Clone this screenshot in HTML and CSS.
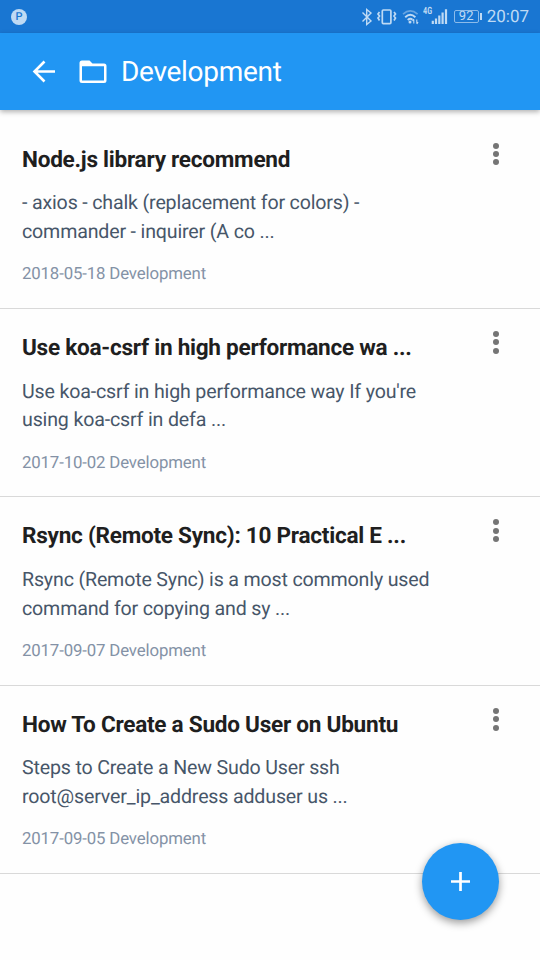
FILE: index.html
```
<!DOCTYPE html>
<html lang="en">
<head>
<meta charset="utf-8">
<title>Development</title>
<link rel="stylesheet" href="styles.css">
</head>
<body>
<div class="status">
  <span class="badge">P</span>
  <div class="indicators">
    <svg class="signals" width="88" height="20" viewBox="361 7 88 20" fill="none" stroke="#bfdaf4" stroke-width="1.4">
      <path d="M362.500 12.500l8.500 8.500-4.300 3.500V9.500l4.300 3.500-8.500 8.500"/>
      <rect x="382.300" y="10" width="8.600" height="13.600" rx="1" stroke-width="1.700"/>
      <path d="M379.500 12l-1.500 2 1.500 2-1.500 2 1.500 2.500M394 12l1.500 2-1.500 2 1.500 2-1.500 2.500" stroke-width="1.700"/>
      <path d="M403 14.200q7.300-6.500 14.600 0" stroke="#68a5e1" stroke-width="1.600"/>
      <path d="M405.200 17.200q5.100-4.700 10.200 0M407.700 20q2.600-2.200 4.800-.3" stroke-width="1.900"/>
      <circle cx="410" cy="22" r="1.500" fill="#bfdaf4" stroke="none"/>
      <path d="M413.800 23.500v-4m-1.300 1.300l1.300-1.600M416.800 19.500v4m1.300-1.300l-1.300 1.600" stroke-width="1.100"/>
      <path d="M432.800 20.800V24M436 18.500V24M439.300 15.500V24M442.600 12.500V24M446 9.300V24" stroke-width="2.200"/>
    </svg>
    <span class="network">4G</span>
    <span class="battery">92</span>
    <span class="clock">20:07</span>
  </div>
</div>
<header class="bar">
  <svg class="back" width="24" height="24" viewBox="0 0 24 24" fill="none" stroke="#fff" stroke-width="2.600"><path d="M23 11.500H3M12.500 1.500L2.500 11.500l10 10"/></svg>
  <svg class="folder" width="30" height="24" viewBox="0 0 30 24"><path fill="#fff" fill-rule="evenodd" d="M4 .5h7.500l3 3h11.500a2.500 2.500 0 0 1 2.500 2.500v14.500a2.500 2.500 0 0 1-2.500 2.500H4a2.500 2.500 0 0 1-2.500-2.500v-17.500A2.500 2.500 0 0 1 4 .5zM4 6.300v14.200h22V6.300z"/></svg>
  <h1>Development</h1>
</header>
<main class="notes">
  <article class="note">
    <h2>Node.js library recommend</h2>
    <p>- axios - chalk (replacement for colors) -<br>commander - inquirer (A co ...</p>
    <div class="meta">2018-05-18 Development</div>
    <div class="more"><i></i><i></i><i></i></div>
  </article>
  <article class="note">
    <h2>Use koa-csrf in high performance wa ...</h2>
    <p>Use koa-csrf in high performance way If you're<br>using koa-csrf in defa ...</p>
    <div class="meta">2017-10-02 Development</div>
    <div class="more"><i></i><i></i><i></i></div>
  </article>
  <article class="note">
    <h2>Rsync (Remote Sync): 10 Practical E ...</h2>
    <p>Rsync (Remote Sync) is a most commonly used<br>command for copying and sy ...</p>
    <div class="meta">2017-09-07 Development</div>
    <div class="more"><i></i><i></i><i></i></div>
  </article>
  <article class="note">
    <h2>How To Create a Sudo User on Ubuntu</h2>
    <p>Steps to Create a New Sudo User ssh<br>root@server_ip_address adduser us ...</p>
    <div class="meta">2017-09-05 Development</div>
    <div class="more"><i></i><i></i><i></i></div>
  </article>
</main>
<div class="fab"><svg width="19" height="19" viewBox="0 0 19 19"><path d="M9.500 0v19M0 9.500h19" stroke="#fff" stroke-width="2.700"/></svg></div>
</body>
</html>
```
FILE: styles.css
```
* { box-sizing: border-box; }
body { margin: 0; height: 960px; overflow: hidden; background: #fefefe; font-family: Roboto, sans-serif; white-space: nowrap; text-rendering: geometricPrecision; }
.status { height: 33px; background: #1976d2; color: #bfdaf4; display: flex; align-items: center; justify-content: space-between; padding: 0 11px; }
.badge { width: 16px; height: 16px; border-radius: 50%; background: #bfdaf4; color: #1976d2; font-size: 11px; line-height: 16px; text-align: center; font-weight: 500; }
.indicators { display: flex; align-items: center; position: relative; }
.network { position: absolute; left: 62px; top: 0; font-size: 10px; line-height: 10px; font-weight: 700; transform: scaleX(.72); transform-origin: left; }
.battery { width: 25px; height: 13px; margin: 0 8px 0 5px; border: 1px solid #8cbbea; border-radius: 2px; font-size: 13px; line-height: 12px; text-align: center; position: relative; }
.battery::after { content: ""; position: absolute; right: -4px; top: 2px; width: 2px; height: 7px; background: #bfdaf4; }
.clock { font-size: 17px; line-height: 20px; }
.bar { height: 77px; background: #2196f3; box-shadow: 0 2px 5px rgba(0,0,0,.3); display: flex; align-items: center; padding-left: 32px; color: #fff; }
.folder { margin-left: 22px; }
.bar h1 { margin: 0 0 0 13px; font-size: 28px; font-weight: 400; line-height: 36px; letter-spacing: -.3px; }
.notes { padding-top: 10.600px; }
.note { position: relative; height: 188.400px; padding: 24px 22px 0; border-bottom: 1.500px solid #d9d9d9; }
.note h2 { margin: 0; font-size: 22.600px; line-height: 30px; font-weight: 700; color: #1f1f1f; letter-spacing: -.27px; }
.note p { margin: 14.700px 0 0; font-size: 19.600px; line-height: 28.800px; color: #475669; letter-spacing: -.16px; }
.meta { margin-top: 15.400px; font-size: 16.800px; line-height: 24px; color: #8492a6; letter-spacing: -.14px; }
.more { position: absolute; left: 493px; top: 22px; display: grid; gap: 2.400px; }
.more i { width: 6px; height: 6px; border-radius: 50%; background: #757575; }
.fab { position: absolute; left: 422px; top: 843px; width: 77px; height: 77px; border-radius: 50%; background: #2196f3; box-shadow: 0 3px 8px rgba(0,0,0,.4); display: grid; place-items: center; }
```
